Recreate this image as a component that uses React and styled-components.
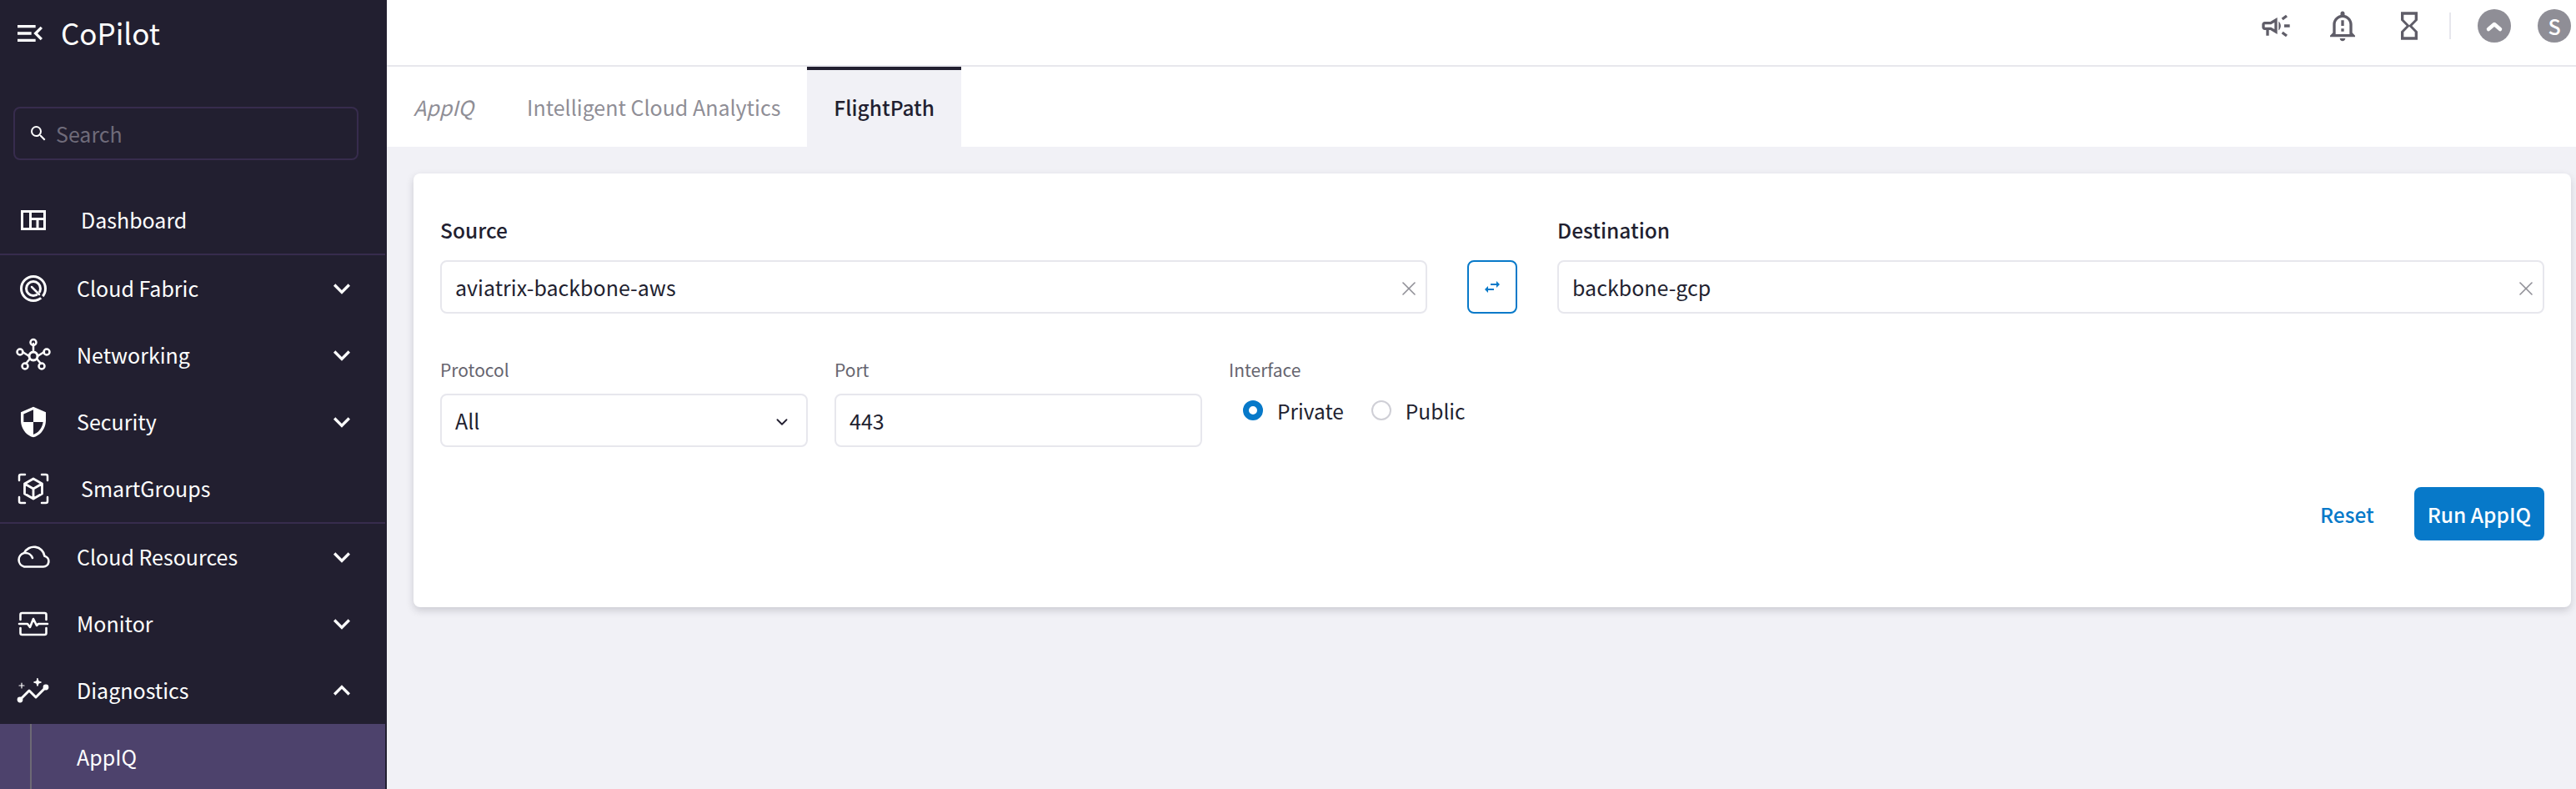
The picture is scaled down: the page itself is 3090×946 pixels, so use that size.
import React from "react";
import styled, { createGlobalStyle } from "styled-components";
import {
  MdMenuOpen,
  MdSearch,
  MdKeyboardArrowDown,
  MdKeyboardArrowUp,
  MdSecurity,
  MdOutlineCampaign,
  MdOutlineNotificationImportant,
  MdHourglassEmpty,
  MdSwapHoriz,
} from "react-icons/md";
import { X, ChevronDown } from "lucide-react";

const GlobalStyle = createGlobalStyle`
  * { box-sizing: border-box; }
  html, body, #root { height: 100%; margin: 0; }
  body {
    overflow: hidden;
    font-family: "Noto Sans CJK SC", "Open Sans", sans-serif;
    background: #f1f1f6;
    color: #221f30;
  }
`;

const Page = styled.div`
  display: flex;
  height: 946px;
  overflow: hidden;
`;

const Sidebar = styled.aside`
  width: 464px;
  flex-shrink: 0;
  background: #221f30;
  color: #fff;
  padding-right: 2px;
  overflow: hidden;
`;

const Brand = styled.div`
  display: flex;
  align-items: center;
  height: 80px;
  padding-left: 16px;
  gap: 17px;
  font-size: 35px;
  line-height: 40px;
`;

const BrandName = styled.span`
  padding-bottom: 3px;
`;

const SearchWrap = styled.div`
  padding: 48px 32px 32px 16px;
`;

const SearchBox = styled.div`
  display: flex;
  align-items: center;
  height: 64px;
  border: 2px solid #372c4d;
  border-radius: 8px;
  padding-left: 16px;
  gap: 9px;
  font-size: 25px;
  color: #6f6b7a;
  svg { color: #fff; }
`;

const Row = styled.div`
  display: flex;
  align-items: center;
  height: 80px;
  padding: 0 32px 0 16px;
  font-size: 25px;
  background: ${(p) => (p.$active ? "#4d426c" : "transparent")};
  position: relative;
`;

const RowIcon = styled.span`
  display: flex;
  align-items: center;
  justify-content: center;
  width: 48px;
  height: 48px;
  flex-shrink: 0;
`;

const RowLabel = styled.span`
  margin-left: ${(p) => (p.$plain ? "33px" : "28px")};
  padding-bottom: 2px;
  line-height: 40px;
`;

const RowArrow = styled.span`
  display: flex;
  margin-left: auto;
`;

const SubLine = styled.span`
  position: absolute;
  left: 36px;
  top: 0;
  bottom: 0;
  width: 2px;
  background: #6d6a75;
`;

const Divider = styled.div`
  height: 2px;
  background: #372c4d;
`;

const Main = styled.main`
  flex: 1;
  min-width: 0;
`;

const TopBar = styled.header`
  display: flex;
  align-items: center;
  justify-content: flex-end;
  height: 80px;
  padding: 0 6px 16px 0;
  background: #fff;
  border-bottom: 2px solid #e7e7ed;
`;

const TopIcon = styled.span`
  display: flex;
  align-items: center;
  justify-content: center;
  width: 40px;
  margin-left: 40px;
  color: #5f5d68;
`;

const TopSep = styled.span`
  width: 2px;
  height: 32px;
  margin-left: 28px;
  background: #e7e7ed;
`;

const Avatar = styled.span`
  display: flex;
  align-items: center;
  justify-content: center;
  width: 40px;
  height: 40px;
  margin-left: 32px;
  border-radius: 50%;
  background: #8f8e96;
  color: #fff;
  font-size: 25px;
  font-weight: 500;
`;

const Tabs = styled.nav`
  display: flex;
  height: 96px;
  background: #fff;
`;

const Tab = styled.div`
  display: flex;
  align-items: center;
  padding: 0 32px 4px;
  font-size: ${(p) => (p.$active ? "24.5px" : "25px")};
  font-weight: ${(p) => (p.$active ? 500 : 400)};
  font-style: ${(p) => (p.$italic ? "italic" : "normal")};
  color: ${(p) => (p.$active ? "#221f30" : "#8f8e96")};
  background: ${(p) => (p.$active ? "#f1f1f6" : "transparent")};
  border-top: 4px solid ${(p) => (p.$active ? "#221f30" : "transparent")};
`;

const Card = styled.section`
  height: 520px;
  margin: 32px 6px 0 32px;
  padding: 48px 32px 0;
  background: #fff;
  border-radius: 8px;
  box-shadow: 0 4px 10px rgba(34, 31, 48, 0.18);
`;

const EndpointGrid = styled.div`
  display: grid;
  grid-template-columns: 1fr 60px 1fr;
  column-gap: 48px;
  align-items: end;
`;

const BoldLabel = styled.div`
  font-size: 24.5px;
  line-height: 40px;
  font-weight: 500;
  margin-bottom: 16px;
`;

const SmallLabel = styled.div`
  font-size: 21px;
  line-height: 30px;
  color: #66656f;
  margin-bottom: 14px;
`;

const Field = styled.div`
  display: flex;
  align-items: center;
  justify-content: space-between;
  height: 64px;
  padding: 0 ${(p) => p.$endPad || "6px"} 0 16px;
  border: 2px solid #e7e7ed;
  border-radius: 8px;
  background: #fff;
  font-size: 25px;
`;

const ClearIcon = styled(X)`
  color: #8f8e96;
  margin-top: 4px;
`;

const SelectArrow = styled(ChevronDown)`
  color: #221f30;
  margin-top: 4px;
`;

const SwapButton = styled.button`
  display: flex;
  align-items: center;
  justify-content: center;
  height: 64px;
  padding: 0;
  border: 2px solid #0779c9;
  border-radius: 8px;
  background: #fff;
  color: #0779c9;
`;

const OptionsRow = styled.div`
  display: grid;
  grid-template-columns: 441px 441px 1fr;
  column-gap: 32px;
  margin-top: 52px;
`;

const RadioRow = styled.div`
  display: flex;
  align-items: center;
  height: 40px;
  padding-left: 17px;
  gap: 33px;
`;

const RadioOption = styled.label`
  display: flex;
  align-items: center;
  gap: 17px;
  font-size: 24.5px;
  color: #221f30;
`;

const RadioDot = styled.span`
  width: 24px;
  height: 24px;
  border-radius: 50%;
  background: #fff;
  border: ${(p) => (p.$on ? "7px solid #0779c9" : "2px solid #cfcfd6")};
`;

const Actions = styled.div`
  display: flex;
  align-items: center;
  justify-content: flex-end;
  gap: 48px;
  margin-top: 48px;
`;

const LinkButton = styled.button`
  padding: 0;
  border: 0;
  background: none;
  color: #0779c9;
  font: inherit;
  font-size: 24.5px;
  font-weight: 500;
`;

const PrimaryButton = styled.button`
  height: 64px;
  padding: 0 16px;
  border: 0;
  border-radius: 8px;
  background: #0779c9;
  color: #fff;
  font: inherit;
  font-size: 24.5px;
  font-weight: 500;
`;

const Svg = ({ children, fill = "none" }) => (
  <svg width="48" height="48" viewBox="0 0 48 48" fill={fill} stroke={fill === "none" ? "currentColor" : "none"} strokeWidth="2.8" strokeLinecap="round" strokeLinejoin="round">
    {children}
  </svg>
);

const DashboardIcon = () => (
  <Svg fill="#fff">
    <path fillRule="evenodd" d="M9 12h30v24H9zM12 15v18h7V15zM22 15v6h14v-6zM22 24v9h5.500v-9zM30.500 24v9H36v-9z" />
  </Svg>
);

const FabricIcon = () => (
  <Svg>
    <circle cx="24" cy="24" r="14.500" strokeWidth="3" />
    <circle cx="24" cy="24" r="8.500" strokeWidth="3" />
    <path d="M24 24l11 11" strokeWidth="3" stroke="#221f30" />
    <path d="M22 22l9 9" strokeWidth="2.500" />
  </Svg>
);

const NetworkIcon = () => (
  <Svg>
    <path d="M24 10v8M11 20l8 5M37 20l-8 5M15 34l5-6M33 34l-5-6" strokeWidth="2.500" />
    <circle cx="24" cy="25" r="5" strokeWidth="3" fill="#221f30" />
    <circle cx="24" cy="8.500" r="3.500" strokeWidth="2.500" />
    <circle cx="8" cy="20" r="3.500" strokeWidth="2.500" />
    <circle cx="40" cy="20" r="3.500" strokeWidth="2.500" />
    <circle cx="14" cy="37" r="3.500" strokeWidth="2.500" />
    <circle cx="34" cy="37" r="3.500" strokeWidth="2.500" />
  </Svg>
);

const SmartGroupIcon = () => (
  <Svg>
    <path d="M7 14V9a2 2 0 0 1 2-2h5M34 7h5a2 2 0 0 1 2 2v5M41 34v5a2 2 0 0 1-2 2h-5M14 41H9a2 2 0 0 1-2-2v-5" strokeWidth="2.500" />
    <path d="M24 12l10.500 6v12L24 36l-10.500-6V18zM13.500 18L24 24l10.500-6M24 24v12" strokeWidth="2.800" />
  </Svg>
);

const CloudIcon = () => (
  <Svg>
    <path d="M13 35.500h23a6.500 6.500 0 0 0 1.500-12.800A13 13 0 0 0 13 19a8.500 8.500 0 0 0 0 16.500z" strokeWidth="2.600" />
    <path d="M14 19a9 9 0 0 1 9 6" strokeWidth="2.600" />
  </Svg>
);

const MonitorIcon = () => (
  <Svg>
    <path d="M8.500 19v-6a2 2 0 0 1 2-2h27a2 2 0 0 1 2 2v6M8.500 29v6a2 2 0 0 0 2 2h27a2 2 0 0 0 2-2v-6" strokeWidth="2.600" />
    <path d="M7 24h10l3 4 4-10 4 8 2-2h11" strokeWidth="2.600" />
  </Svg>
);

const DiagnosticsIcon = () => (
  <Svg>
    <path d="M8 35l11-11 8 8 12-12" strokeWidth="3" />
    <circle cx="8" cy="35" r="2" fill="#fff" />
    <circle cx="39" cy="20" r="2" fill="#fff" />
    <path d="M29 9.500l1.200 3.300 3.300 1.200-3.300 1.200L29 18.500l-1.200-3.300-3.300-1.200 3.300-1.200z" fill="#fff" strokeWidth="1" />
    <path d="M10 15v6M7 18h6" strokeWidth="1.200" />
  </Svg>
);

const navGroups = [
  [{ label: "Dashboard", icon: <DashboardIcon />, plain: true }],
  [
    { label: "Cloud Fabric", icon: <FabricIcon /> },
    { label: "Networking", icon: <NetworkIcon /> },
    { label: "Security", icon: <MdSecurity size={40} /> },
    { label: "SmartGroups", icon: <SmartGroupIcon />, plain: true },
  ],
  [
    { label: "Cloud Resources", icon: <CloudIcon /> },
    { label: "Monitor", icon: <MonitorIcon /> },
    { label: "Diagnostics", icon: <DiagnosticsIcon />, open: true },
  ],
];

function NavRow({ item }) {
  return (
    <Row>
      <RowIcon>{item.icon}</RowIcon>
      <RowLabel $plain={item.plain}>{item.label}</RowLabel>
      {!item.plain && (
        <RowArrow>
          {item.open ? <MdKeyboardArrowUp size={40} /> : <MdKeyboardArrowDown size={40} />}
        </RowArrow>
      )}
    </Row>
  );
}

export default function App() {
  return (
    <>
      <GlobalStyle />
      <Page>
        <Sidebar>
          <Brand>
            <MdMenuOpen size={40} />
            <BrandName>CoPilot</BrandName>
          </Brand>
          <SearchWrap>
            <SearchBox>
              <MdSearch size={24} />
              Search
            </SearchBox>
          </SearchWrap>
          {navGroups.map((group, i) => (
            <React.Fragment key={i}>
              {i > 0 && <Divider />}
              {group.map((item) => (
                <NavRow key={item.label} item={item} />
              ))}
            </React.Fragment>
          ))}
          <Row $active>
            <SubLine />
            <RowIcon />
            <RowLabel>AppIQ</RowLabel>
          </Row>
        </Sidebar>
        <Main>
          <TopBar>
            <TopIcon><MdOutlineCampaign size={40} /></TopIcon>
            <TopIcon><MdOutlineNotificationImportant size={44} /></TopIcon>
            <TopIcon><MdHourglassEmpty size={40} /></TopIcon>
            <TopSep />
            <Avatar>
              <svg width="24" height="24" viewBox="0 0 24 24" fill="none" stroke="#fff" strokeWidth="4.500" strokeLinecap="round" strokeLinejoin="round">
                <path d="M5 16l7-6 7 6" />
              </svg>
            </Avatar>
            <Avatar>S</Avatar>
          </TopBar>
          <Tabs>
            <Tab $italic>AppIQ</Tab>
            <Tab>Intelligent Cloud Analytics</Tab>
            <Tab $active>FlightPath</Tab>
          </Tabs>
          <Card>
            <EndpointGrid>
              <div>
                <BoldLabel>Source</BoldLabel>
                <Field>
                  aviatrix-backbone-aws
                  <ClearIcon size={28} strokeWidth={1.4} />
                </Field>
              </div>
              <SwapButton>
                <MdSwapHoriz size={24} />
              </SwapButton>
              <div>
                <BoldLabel>Destination</BoldLabel>
                <Field>
                  backbone-gcp
                  <ClearIcon size={28} strokeWidth={1.4} />
                </Field>
              </div>
            </EndpointGrid>
            <OptionsRow>
              <div>
                <SmallLabel>Protocol</SmallLabel>
                <Field $endPad="18px">
                  All
                  <SelectArrow size={22} strokeWidth={2} />
                </Field>
              </div>
              <div>
                <SmallLabel>Port</SmallLabel>
                <Field>443</Field>
              </div>
              <div>
                <SmallLabel>Interface</SmallLabel>
                <RadioRow>
                  <RadioOption><RadioDot $on />Private</RadioOption>
                  <RadioOption><RadioDot />Public</RadioOption>
                </RadioRow>
              </div>
            </OptionsRow>
            <Actions>
              <LinkButton>Reset</LinkButton>
              <PrimaryButton>Run AppIQ</PrimaryButton>
            </Actions>
          </Card>
        </Main>
      </Page>
    </>
  );
}
